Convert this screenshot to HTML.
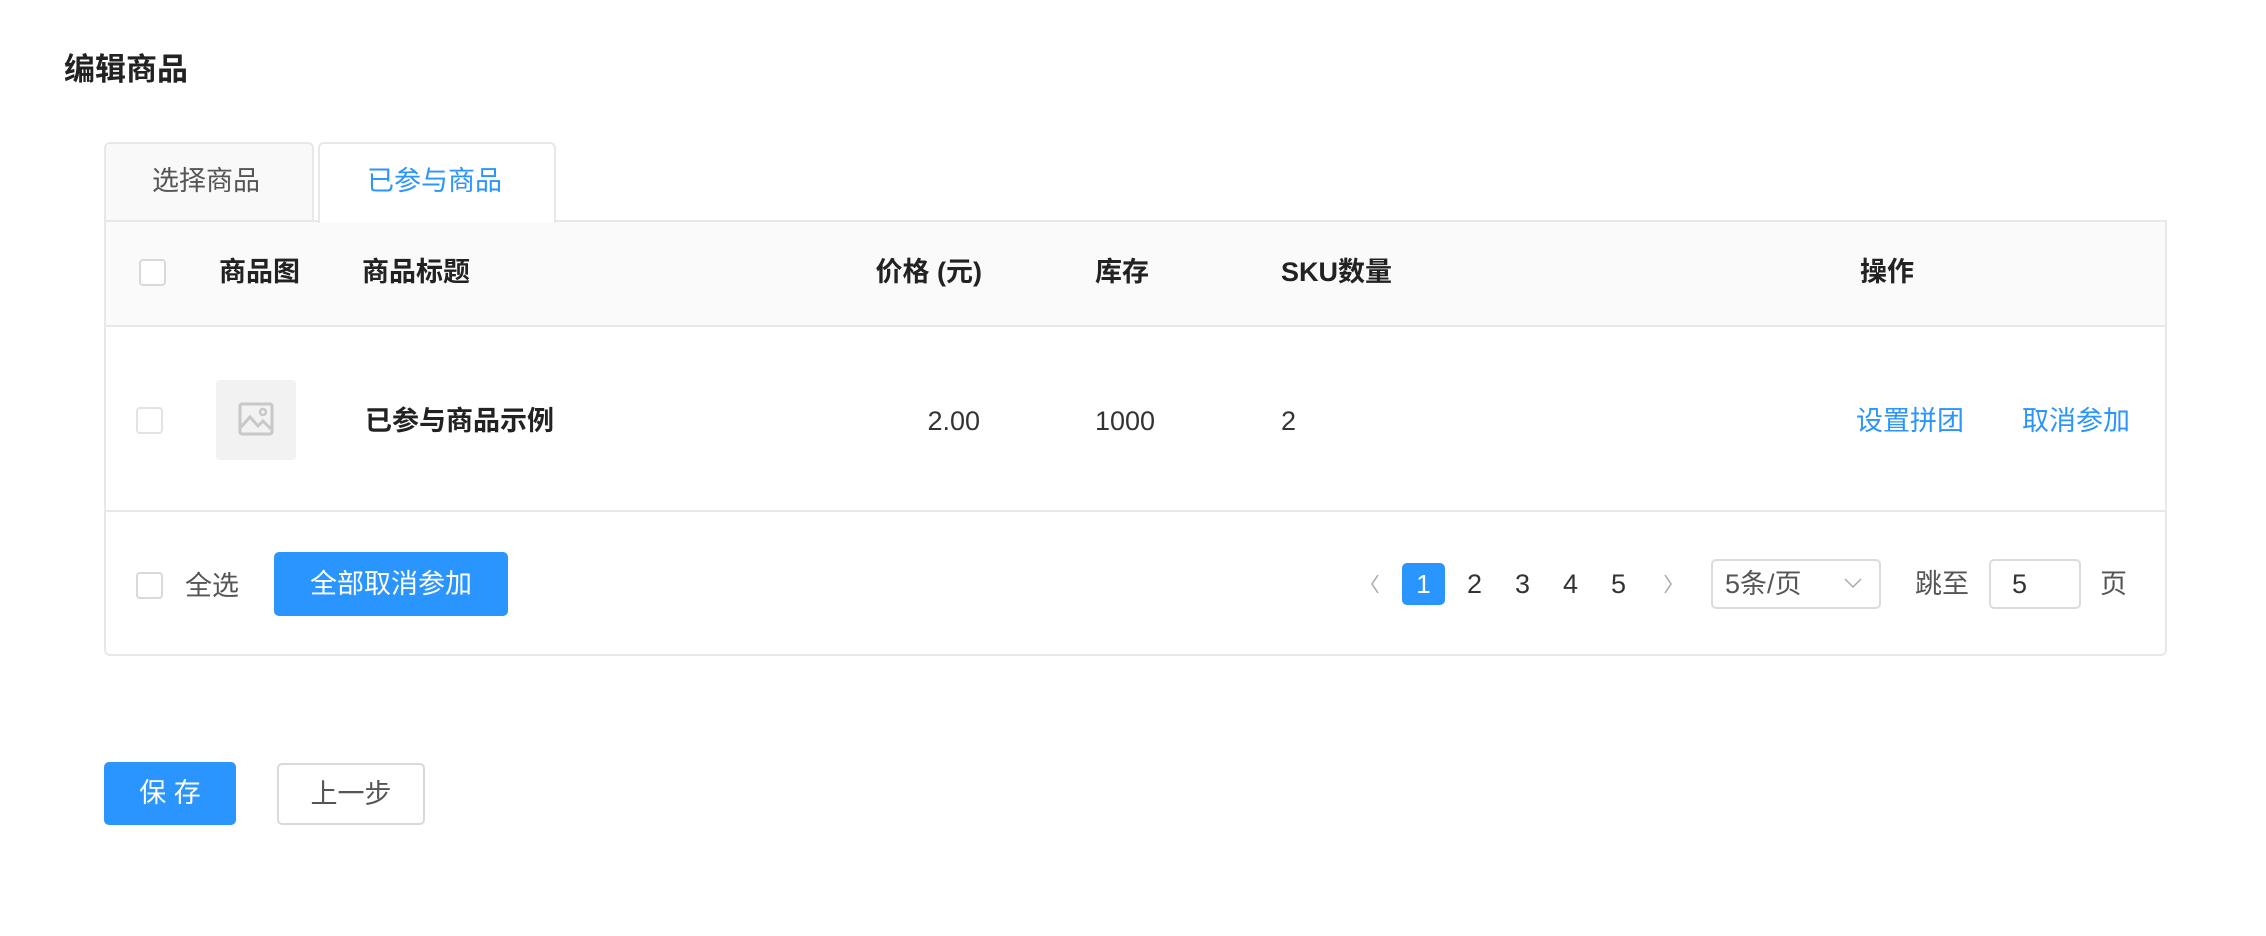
<!DOCTYPE html>
<html><head><meta charset="utf-8"><style>
*{box-sizing:border-box;margin:0;padding:0}
body{width:2266px;height:936px;background:#fff;font-family:"Liberation Sans","Noto Sans CJK SC",sans-serif;color:#333;position:relative;overflow:hidden}
.a{position:absolute;white-space:nowrap}
.t{font-size:27px;line-height:36px;margin-top:-3px}
.b{font-weight:bold;color:#222}
.cb{position:absolute;width:27px;height:27px;border:2px solid #d9d9d9;border-radius:4px;background:#fff}
.blue{color:#2a94ff}
</style></head><body>
<div class="a b" style="left:64px;top:50px;font-size:31px;line-height:40px">编辑商品</div>

<div class="a" style="left:104px;top:142px;width:210px;height:79px;background:#f9f9f9;border:2px solid #e8e8e8;border-bottom:none;border-radius:6px 6px 0 0"></div>
<div class="a t" style="left:152px;top:166px;color:#555">选择商品</div>
<div class="a" style="left:318px;top:142px;width:238px;height:81px;background:#fff;border:2px solid #e8e8e8;border-bottom:none;border-radius:6px 6px 0 0;z-index:2"></div>
<div class="a t blue" style="left:367px;top:166px;z-index:3">已参与商品</div>

<div class="a" style="left:104px;top:220px;width:2063px;height:436px;border:2px solid #e8e8e8;border-radius:0 0 6px 6px"></div>
<div class="a" style="left:106px;top:222px;width:2059px;height:105px;background:#fafafa;border-bottom:2px solid #e8e8e8"></div>
<div class="a" style="left:106px;top:510px;width:2059px;height:2px;background:#e8e8e8"></div>

<div class="cb" style="left:139px;top:259px"></div>
<div class="a t b" style="left:219px;top:257px">商品图</div>
<div class="a t b" style="left:362px;top:257px">商品标题</div>
<div class="a t b" style="left:782px;width:200px;text-align:right;top:257px">价格 (元)</div>
<div class="a t b" style="left:1095px;top:257px">库存</div>
<div class="a t b" style="left:1281px;top:257px">SKU数量</div>
<div class="a t b" style="left:1860px;top:257px">操作</div>

<div class="cb" style="left:136px;top:407px;border-color:#e3e3e3"></div>
<div class="a" style="left:216px;top:380px;width:80px;height:80px;background:#f2f2f2;border-radius:4px"></div>
<svg class="a" style="left:238px;top:401px" width="36" height="36" viewBox="0 0 36 36"><rect x="2" y="3" width="32" height="30" rx="2" fill="none" stroke="#c8c8c8" stroke-width="3"/><path d="M3 26 L12 16 L20 25 L25 20 L33 28" fill="none" stroke="#c8c8c8" stroke-width="3"/><circle cx="25" cy="11" r="3" fill="none" stroke="#c8c8c8" stroke-width="2.5"/></svg>
<div class="a t b" style="left:365px;top:406px">已参与商品示例</div>
<div class="a t" style="left:780px;width:200px;text-align:right;top:406px">2.00</div>
<div class="a t" style="left:1095px;top:406px">1000</div>
<div class="a t" style="left:1281px;top:406px">2</div>
<div class="a t blue" style="left:1856px;top:406px">设置拼团</div>
<div class="a t blue" style="left:2022px;top:406px">取消参加</div>

<div class="cb" style="left:136px;top:572px"></div>
<div class="a t" style="left:185px;top:571px;color:#555">全选</div>
<div class="a" style="left:274px;top:552px;width:234px;height:64px;background:#2a94ff;border-radius:5px;color:#fff;text-align:center;line-height:64px;font-size:27px">全部取消参加</div>

<svg class="a" style="left:1368px;top:572px" width="14" height="24"><path d="M10 3 L4 12 L10 21" fill="none" stroke="#aaa" stroke-width="1.5"/></svg>
<div class="a" style="left:1402px;top:563px;width:43px;height:42px;background:#2a94ff;border-radius:5px;color:#fff;text-align:center;line-height:42px;font-size:26px">1</div>
<div class="a t" style="left:1467px;top:569px">2</div>
<div class="a t" style="left:1515px;top:569px">3</div>
<div class="a t" style="left:1563px;top:569px">4</div>
<div class="a t" style="left:1611px;top:569px">5</div>
<svg class="a" style="left:1661px;top:572px" width="14" height="24"><path d="M4 3 L10 12 L4 21" fill="none" stroke="#aaa" stroke-width="1.5"/></svg>
<div class="a" style="left:1711px;top:559px;width:170px;height:50px;border:2px solid #dcdcdc;border-radius:5px"></div>
<div class="a t" style="left:1725px;top:569px;color:#555">5条/页</div>
<svg class="a" style="left:1843px;top:576px" width="20" height="14"><path d="M2 3 L10 11 L18 3" fill="none" stroke="#aaa" stroke-width="1.5"/></svg>
<div class="a t" style="left:1915px;top:569px;color:#555">跳至</div>
<div class="a" style="left:1989px;top:559px;width:92px;height:50px;border:2px solid #dcdcdc;border-radius:5px"></div>
<div class="a t" style="left:2012px;top:569px">5</div>
<div class="a t" style="left:2100px;top:569px;color:#555">页</div>

<div class="a" style="left:104px;top:762px;width:132px;height:63px;background:#2a94ff;border-radius:5px;color:#fff;text-align:center;line-height:63px;font-size:27px">保 存</div>
<div class="a" style="left:277px;top:763px;width:148px;height:62px;border:2px solid #d9d9d9;border-radius:5px;color:#555;text-align:center;line-height:58px;font-size:27px">上一步</div>
</body></html>
